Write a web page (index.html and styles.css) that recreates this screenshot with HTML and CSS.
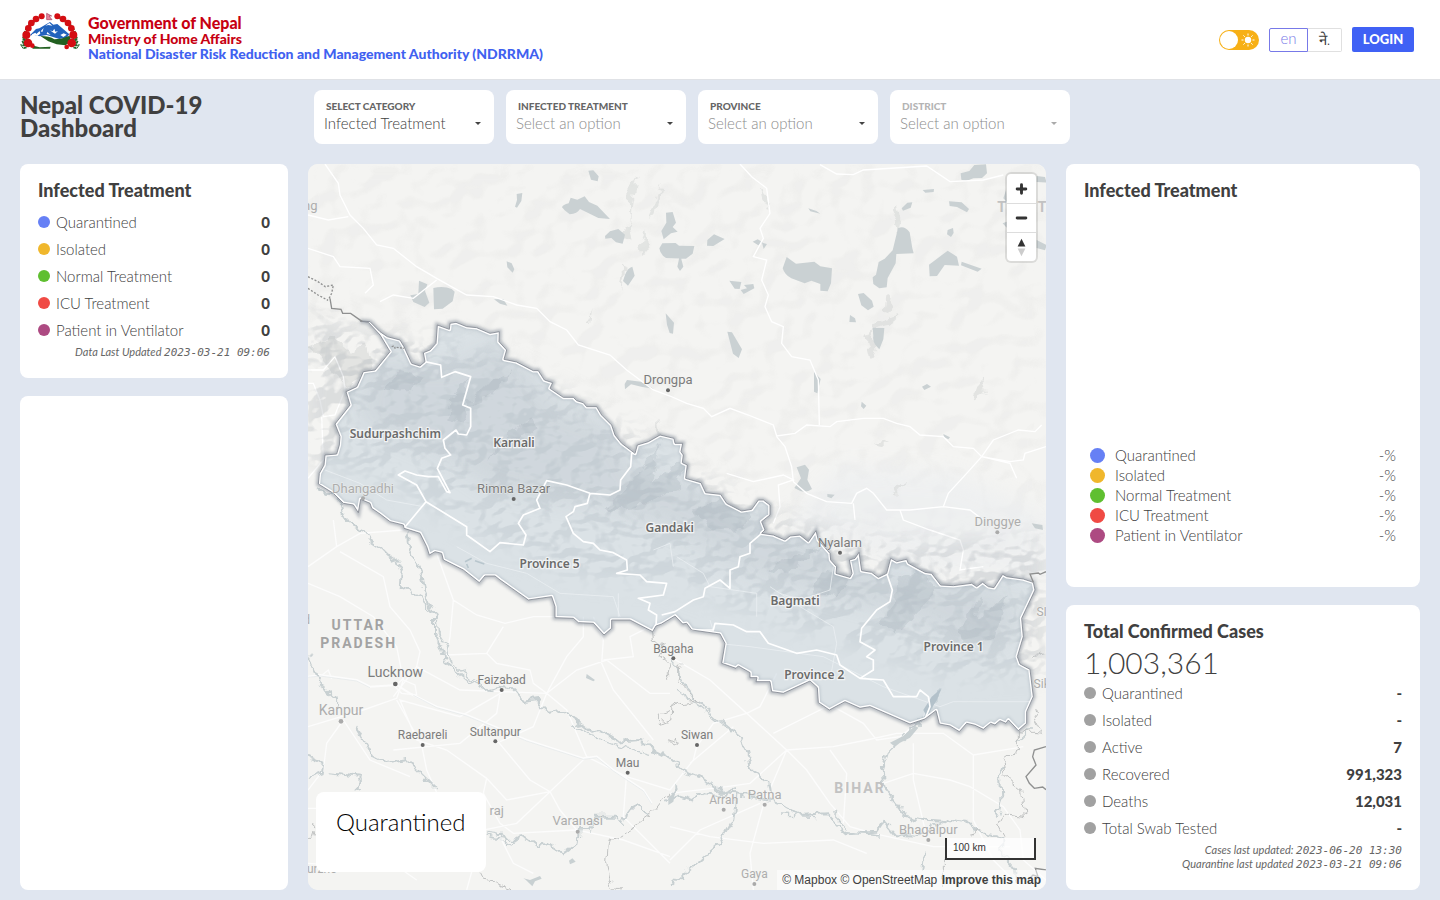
FILE: index.html
```html
<!DOCTYPE html>
<html lang="en">
<head>
<meta charset="utf-8">
<title>Nepal COVID-19 Dashboard</title>
<link rel="stylesheet" href="styles.css">
</head>
<body>
<header class="topbar">
  <svg class="emblem" viewBox="60 36 180 114" aria-hidden="true">
    <g fill="none" stroke="#23662a" stroke-width="9" stroke-dasharray="5 3">
      <path d="M76 146Q58 82 124 50M224 146Q242 82 172 50"/>
    </g>
    <path d="M70 146l-8-12 12 4-8-14 12 5-10-16 13 7-7-16 12 9M230 146l8-12-12 4 8-14-12 5 10-16-13 7 7-16-12 9" fill="none" stroke="#23662a" stroke-width="3"/>
    <path d="M88 107l20-20 10-2 32-19 10 8 12-2 36 31-8 10-22 4-38-12-22 4-18-5z" fill="#2263bd"/>
    <path d="M96 103l10-5 3 4 10-9 2 8-9 7-8-2-7 6zM136 77l12-8 9 8-12-2zM150 91l8 3 5-8 3 9 8-2-9 8-8-5zM181 105l10-5 9 4-10 7zM122 94l9-10-4 12zM142 96l10 9-12-3z" fill="#fff"/>
    <path d="M84 119l20-10 30 2 22 10 14 14 36 4-6 7H96z" fill="#fff"/>
    <path d="M121 108q28 0 42 10l20-2 26-9 5 18-18 11-26-3-25-9zM101 137l18 5 33-2-2 6H97z" fill="#226021"/>
    <g fill="#d40d12">
      <circle cx="125" cy="49" r="9"/><circle cx="108" cy="57" r="10"/><circle cx="94" cy="69" r="10"/><circle cx="85" cy="85" r="10"/><circle cx="79" cy="105" r="12"/><circle cx="84" cy="129" r="13"/>
      <circle cx="172" cy="49" r="9"/><circle cx="189" cy="57" r="10"/><circle cx="204" cy="69" r="10"/><circle cx="214" cy="85" r="10"/><circle cx="220" cy="105" r="12"/><circle cx="215" cy="129" r="13"/>
      <circle cx="200" cy="141" r="7"/><circle cx="97" cy="137" r="7"/>
    </g>
    <path d="M140 40l15 8h-8l9 11h-16z" fill="#e8869b" stroke="#a2405f" stroke-width="2"/>
  </svg>
  <div class="agency">
    <strong class="agency-gov">Government of Nepal</strong>
    <strong class="agency-ministry">Ministry of Home Affairs</strong>
    <strong class="agency-name">National Disaster Risk Reduction and Management Authority (NDRRMA)</strong>
  </div>
  <div class="actions">
    <label class="theme"><input type="checkbox" class="theme-input" aria-label="Dark theme"><span class="theme-knob"></span>
      <svg class="theme-sun" viewBox="0 0 14 14" aria-hidden="true"><circle cx="7" cy="7" r="3.2" fill="#fff"/><path d="M7 .5v2M7 11.500v2M.5 7h2M11.500 7h2M2.400 2.400l1.400 1.400M10.200 10.200l1.400 1.400M2.400 11.600l1.400-1.400M10.200 3.800l1.400-1.400" stroke="#fff"/></svg>
    </label>
    <div class="langs"><button class="lang lang-active" type="button">en</button><button class="lang" type="button" lang="ne">ने.</button></div>
    <button class="login" type="button">LOGIN</button>
  </div>
</header>

<section class="toolbar">
  <h1 class="title">Nepal COVID-19 Dashboard</h1>
  <form class="filters">
    <div class="filter"><label class="filter-label" for="category">SELECT CATEGORY</label><select class="filter-select chosen" id="category"><option>Infected Treatment</option></select></div>
    <div class="filter"><label class="filter-label" for="treatment">INFECTED TREATMENT</label><select class="filter-select" id="treatment"><option>Select an option</option></select></div>
    <div class="filter"><label class="filter-label" for="province">PROVINCE</label><select class="filter-select" id="province"><option>Select an option</option></select></div>
    <div class="filter disabled"><label class="filter-label" for="district">DISTRICT</label><select class="filter-select" id="district" disabled><option>Select an option</option></select></div>
  </form>
</section>

<main class="board">
  <div class="column">
    <section class="card">
      <h2 class="card-title">Infected Treatment</h2>
      <ul class="stats">
        <li class="stat"><i class="dot blue"></i>Quarantined<b class="value">0</b></li>
        <li class="stat"><i class="dot amber"></i>Isolated<b class="value">0</b></li>
        <li class="stat"><i class="dot green"></i>Normal Treatment<b class="value">0</b></li>
        <li class="stat"><i class="dot red"></i>ICU Treatment<b class="value">0</b></li>
        <li class="stat"><i class="dot plum"></i>Patient in Ventilator<b class="value">0</b></li>
      </ul>
      <p class="updated">Data Last Updated <time class="stamp">2023-03-21 09:06</time></p>
    </section>
    <section class="card grow"></section>
  </div>

  <section class="map" aria-label="Map of Nepal">
    <svg class="map-art" viewBox="24 12 2214 2178" preserveAspectRatio="xMidYMid slice">
      <defs>
        <path id="nepal" d="M180 483L210 485 240 515 262 530 300 540 312 560 335 610 360 618 375 605 370 578 390 570 408 550 412 495 448 508 450 490 468 487 500 500 530 503 570 520 598 515 597 545 620 570 612 598 650 606 700 632 715 632 733 660 758 668 750 685 790 712 820 712 830 722 850 728 860 740 890 740 905 765 935 795 945 825 965 850 1005 880 1012 855 1045 845 1080 825 1122 835 1125 850 1148 850 1143 875 1150 885 1147 908 1162 915 1157 955 1203 968 1217 998 1262 1003 1280 1030 1325 1053 1355 1048 1375 1020 1390 1020 1410 1035 1410 1065 1385 1085 1395 1110 1385 1120 1420 1125 1455 1140 1470 1128 1500 1125 1525 1145 1548 1112 1555 1140 1590 1180 1592 1200 1610 1220 1608 1240 1650 1252 1656 1240 1648 1200 1665 1195 1677 1177 1685 1232 1715 1237 1735 1252 1760 1240 1772 1195 1790 1205 1820 1198 1825 1210 1875 1237 1895 1240 1922 1275 1960 1277 2015 1270 2030 1280 2048 1267 2065 1280 2082 1283 2108 1243 2120 1250 2170 1257 2200 1267 2205 1290 2165 1375 2170 1430 2152 1490 2160 1512 2190 1528 2200 1610 2180 1655 2180 1690 2155 1712 2125 1680 2118 1690 2100 1682 2085 1695 2072 1690 2050 1708 2025 1696 2000 1690 1978 1715 1950 1698 1918 1692 1908 1652 1875 1677 1830 1692 1710 1640 1680 1645 1635 1625 1588 1650 1555 1628 1552 1583 1530 1563 1450 1600 1415 1595 1410 1565 1368 1565 1371 1553 1350 1553 1350 1538 1315 1518 1308 1525 1265 1510 1275 1450 1260 1422 1175 1410 1160 1390 1148 1392 1125 1368 1085 1392 1068 1398 1058 1415 990 1380 935 1380 935 1405 912 1425 880 1390 835 1388 820 1375 765 1373 765 1340 755 1310 685 1320 600 1260 585 1248 555 1248 538 1268 490 1230 430 1200 425 1180 405 1175 388 1185 380 1160 360 1120 312 1105 310 1095 270 1085 240 1062 215 1045 210 1030 182 1018 175 1058 160 1035 130 1030 100 1000 55 972 58 940 72 915 75 885 110 882 118 855 120 830 105 792 150 735 138 695 170 680 190 635 225 630 270 575 240 525 205 487Z"/>
        <clipPath id="inNepal"><use href="#nepal"/></clipPath>
        <filter id="ridges" x="0" y="0" width="100%" height="100%">
          <feTurbulence type="fractalNoise" baseFrequency=".010 .014" numOctaves="3" seed="8"/>
          <feDiffuseLighting surfaceScale="75" diffuseConstant="1.100" lighting-color="#fff"><feDistantLight azimuth="225" elevation="55"/></feDiffuseLighting>
          <feColorMatrix values="0 0 0 0 .42  0 0 0 0 .45  0 0 0 0 .48  -1.600 0 0 0 1.350"/>
        </filter>
        <filter id="swells" x="0" y="0" width="100%" height="100%">
          <feTurbulence type="fractalNoise" baseFrequency=".010 .012" numOctaves="2" seed="3"/>
          <feDiffuseLighting surfaceScale="70" diffuseConstant="1.100" lighting-color="#fff"><feDistantLight azimuth="225" elevation="55"/></feDiffuseLighting>
          <feColorMatrix values="0 0 0 0 .5  0 0 0 0 .5  0 0 0 0 .5  -1.600 0 0 0 1.300"/>
        </filter>
        <filter id="rough" x="-5%" y="-5%" width="110%" height="110%" color-interpolation-filters="sRGB">
          <feTurbulence type="fractalNoise" baseFrequency=".035" numOctaves="2" seed="5"/>
          <feDisplacementMap in="SourceGraphic" scale="34" xChannelSelector="R" yChannelSelector="G"/>
        </filter>
        <filter id="soft" x="-20%" y="-20%" width="140%" height="140%"><feGaussianBlur stdDeviation="32"/></filter>
        <filter id="halo" x="-5%" y="-5%" width="110%" height="110%"><feGaussianBlur stdDeviation="5"/></filter>
        <mask id="hills" maskUnits="userSpaceOnUse" x="0" y="0" width="2300" height="2200"><path d="M20 440L200 520 480 540 800 700 1110 880 1400 1060 1800 1150 2240 1130 2240 1540 1960 1560 1560 1430 1130 1280 800 1250 480 1100 250 960 0 900Z" fill="#fff" filter="url(#soft)"/></mask>
        <mask id="plateau" maskUnits="userSpaceOnUse" x="0" y="0" width="2300" height="2200"><path d="M0 0H2240V1200L1600 1160 1200 950 700 590 0 500Z" fill="#fff" filter="url(#soft)"/></mask>
      </defs>
      <rect x="24" y="12" width="2214" height="2178" fill="#f4f4f2"/>
      <g mask="url(#plateau)"><rect x="24" y="12" width="2214" height="1300" filter="url(#swells)" opacity=".08"/></g>
      <path d="M1450 1100L1620 920 1960 940 2240 1060V1250L1900 1240z" fill="#eaedf0" opacity=".55" filter="url(#soft)"/>
      <g fill="#d8dad9" opacity=".6" filter="url(#rough)">
        <path d="M985 95l28-53-16 85-9 80 7 38-34-15 28-48zM1060 140l28-75-18 98-22 4zM1020 250l18-38 8 55-19 21zM980 330l-25 57 12-79zM860 490l18-49-8 47zM1380 85l24 28 4 42-20-34zM1775 180l18-45 10 45-12 48zM1760 405l18 5-10 50-14-4zM1720 490l72-25-4 27-38 8-34 12zM1715 505l9 70-12 20-16-64zM2045 650l12 52-43 22zM1720 855l50-17-24 24zM1775 990l45-25-35 44zM1070 770l14 62-18-4zM30 560l70-30 50 45 45-30 20 80-70 55-60-60z"/>
      </g>
      <g fill="#cad1d3">
        <path d="M865 32l15-1 16 18-3 15-20-5zM650 102l17-3-3 24-13 20-6-3 6-20zM786 142q2-8 20-12l6-17 20 6 22-10 13 17 25 11 38 40-35-3-35-17-20-10q-8 14-31 16l-15-12zM915 228l15-14 25-7 20 17-7 27-20-4-14-13-18 2zM1098 158l20-2 10 32-10 13 15 14-20 5-22 18-7-25 15-25zM1078 265l9-15 40-1 10 8 46 1-5 23-20 15-60-2q-18-10-20-29zM620 304l15 6 8 18-5 10-16-16zM975 345q8-22 22-25l7 27-20 30-15-14zM357 362l25 11-7 20 13 35-14 13-34-15-9-20 24-4zM400 384q30-8 55 3l9 8-6 29-30 22-26 2zM582 418l28-1 12 20-22-6zM1097 460l25 28-3 33-10-2-8-25zM975 688l-1-16 7-12 42 5 38 21-34-5-34-8zM1222 240l20-17 32 14-34 21-19-1zM1358 245l15-7 15 9-13 9zM1386 248l15 4-10 15zM1132 320l8-38 10 38-10 13zM1288 362l36 4-5 21-15-1zM1332 375l28-3 3 13-32 17-9-12 19-5zM1282 515l14 2 30 51-10 26-17-13zM1525 145l24 8 12 8-30-7zM1498 325l18-4 21 8-35 5zM1448 325l12-34 28 20 55-6 18 14 35 6-3 45-10 24-22-2v-20l-27-10-20 8-40-15q-20-10-26-30zM1674 402l17-3 25 23 5 18-17 11-20-15zM1650 465l15 10 3 12-20-1zM1718 503l35 1-3 34-12 30q-22-20-18-40zM1794 205q18-10 35 12l8 48 4 15-52 2-2 28-24 44-3 28-22 3-18-13-2-20 10-8 8-38 18-10 24-25zM1805 145l17-17 15-1-5 16-23 9zM1868 90l34-3-1 9-25 2zM1887 314l20-15 36-27 28 18 6 27-43-2-23 33-22 1zM1985 305l60 21-12 9-50-19zM1947 124l38 3 22 20-6 10-30-16-22-3zM1943 210l16-6 2 15-8 12-12-8zM1982 40l26-7 15-18 35-2 3 27-15 14-26 1-21 8-15-4zM2210 48l25 3 5 17-30-2zM2110 115l8-25 2 35zM2108 190l12-5v18zM2210 240l30 15-5 16-25-7zM1542 635l20 22-10 43-10-5zM1490 922l25-8 12 15-5 30 14 28q-16 12-35 6l-18-9 20-29zM1582 1002l22 2-10 11-12-5zM1685 725l14 12-8 10-8-8zM1866 680l15-8 12 8-20 10zM1930 822l20 10-5 6-13-6zM2195 1090l32 5 2 15-24-5z"/>
      </g>
      <g fill="none" stroke="#fff" stroke-width="4">
        <path d="M75 12L115 70 120 105 150 165 190 205 230 255 280 265 350 320 410 355 500 405 580 410 650 435 710 445 750 485 800 510 835 555 930 585 980 630 1060 690 1110 708 1160 730 1210 745 1235 770 1290 745 1345 765 1370 775 1420 795 1430 828 1485 820 1520 795 1590 800 1610 785 1690 775 1750 775 1790 790 1830 800 1860 825 1930 830 1960 860 2020 865 2045 890 2130 905 2170 900 2175 880 2238 860M1320 12L1355 50 1400 85 1410 160 1380 205 1390 235 1360 290 1400 300 1385 360 1405 405 1395 440 1415 485 1450 500 1445 550 1475 590 1530 600 1555 660 1558 795M1560 14L1610 42 1660 44 1690 30 1880 18 1950 65 2050 60 2110 45M24 265L100 290 120 320 210 325 220 375 195 400M240 425L280 405 340 415 410 360M24 165L85 180 145 170M1430 830L1455 860 1475 920 1480 965 1520 1000 1580 1025 1655 1030 1670 1000 1700 985 1720 1000 1760 1050 1830 1050 1930 1040 1945 1000 2000 940 2045 890 2080 840 2155 810 2205 815 2225 795M1280 940L1360 965 1450 945 1480 960 1435 975 1440 1040 1420 1090M1660 1030L1665 1080M1800 1050L1810 1080 1890 1110 1980 1140 1990 1170 1980 1230 2050 1220M1930 1040L2010 1050 2050 1080M2045 890L2130 910 2150 955M24 630L70 630 105 590 130 650 135 690 105 765 70 770 60 720 40 670 24 670M65 770L70 900 24 955"/>
      </g>
      <g stroke="#fcfcfc" fill="none" stroke-width="4">
        <path d="M24 1270L120 1310 220 1370 290 1460 310 1560 290 1615 190 1650 24 1700M100 1080L110 1160 24 1220M110 1160L180 1120 310 1110M120 1175L250 1250 270 1340 330 1410 360 1475 350 1520 480 1590 610 1595 740 1600 830 1530 920 1500 1050 1600 1110 1600M410 1180L460 1320 530 1365 615 1390 700 1370 830 1370M460 1320L450 1430 440 1485 560 1480 610 1400M560 1480L590 1510 690 1530 700 1570 740 1600M610 1595L480 1670 300 1620 350 1740 440 1770 560 1855 620 1920 750 1895 860 1790 800 1650 740 1600 800 1490 850 1430 850 1370M350 1520L280 1610M130 1680L80 1750 70 1830 24 1890M130 1680L210 1800 330 1850M280 1770L480 1750 590 1660 600 1600M590 1740L690 1860 750 1895 780 1950 830 2010 970 2040 1110 2090M560 1855L550 1900 600 1990 640 2020 830 2010M290 1620L365 1755 380 1830 420 1920M750 1895L650 1990 550 2010 500 2190M860 1790L980 1850 1110 1890 1180 1800 1190 1760 1240 1690 1340 1660 1460 1770 1600 1760 1700 1740 1790 1720 1930 1720 2020 1785 2170 1760M1110 1490L1230 1560 1340 1660 1380 1640 1430 1540M1460 1770L1350 1870 1280 1880 1110 1900M1460 1770L1520 1830 1590 1930 1650 2000 1720 2020 1900 2060 2130 2060M1460 1770L1390 1935 1350 2080 1360 2190M1850 1690L1800 1730 1730 1740 1690 1690 1600 1640M1750 1870L1840 1840 1950 1860 2010 1880 2110 1940 2160 2010 2170 2100 2238 2160M2020 1785L2020 1980 2080 2100 2160 2180M1110 2000L1230 2030 1390 2050 1600 2040 1700 2080M1110 2100L1200 2010 1380 1930M880 1370L910 1440 905 1510 940 1590 1060 1740M910 1500L1000 1490 990 1430 1110 1370M740 1600L700 1700 600 1745M24 1945L50 1945M980 1840L970 1970 1110 2110M24 2110L180 2120 250 2090 350 2160M600 2030L640 2110 700 2140M1170 1810L1300 1700M1420 1720L1580 1640M1590 1770L1640 1840 1630 1990M1840 1750L1840 1860 1880 2030"/>
        <path d="M24 1550L60 1545 170 1560 210 1580 290 1575 330 1600 410 1640 500 1665 680 1740 850 1795 890 1790 940 1830 1030 1890 1055 1930" stroke-width="6"/>
        <path d="M310 1560l35 15 5 30-45-5-20-20 25-25M60 1550l25-20 10 26"/>
      </g>
      <path d="M24 1552L60 1548 170 1563 210 1583M340 1606L410 1643 500 1668 680 1743 850 1798 890 1793 940 1833 1030 1893 1055 1933" fill="none" stroke="#e2e7e8" stroke-width="2"/>
      <g fill="none" stroke="#c8d0d2" stroke-width="6" stroke-linejoin="round" filter="url(#rough)">
        <path d="M50 975L80 1000 100 1010 125 1030 135 1070 155 1100 190 1115 210 1140 240 1160 265 1185 295 1205 305 1240 302 1280 330 1290 365 1310 385 1350M320 1120L328 1170 350 1210 365 1240 375 1280 385 1330 405 1370 405 1420 430 1470 435 1505 480 1540 510 1565 560 1590 600 1580 640 1585 675 1625 710 1620 745 1655 785 1650 825 1680 870 1715 900 1710 955 1745 1020 1740 1060 1770 1110 1795 1150 1830 1210 1855 1260 1890 1275 1900 1330 1905 1440 1930 1500 1965 1580 1960 1640 2020 1730 2015 1750 1985 1785 2025 1840 2030 1900 2000 1950 1980 2000 1985 2050 2020 2110 2035 2110 2090 2145 2130 2150 2170M24 1485L50 1545 75 1590 110 1620 115 1650M165 1700L190 1740 220 1790 260 1810 320 1800 360 1840 410 1890M24 1790L70 1810 65 1840 24 1855M80 1840L180 1850 170 1885 190 1895M565 2015L600 2020 620 2055 665 2025 715 2065 735 2045 790 2080 835 2050 840 2010 870 2010 885 1970 950 1970 970 1995 980 1955 1010 1935 1050 1965M1110 1490L1150 1570 1190 1620 1270 1690 1320 1730 1340 1770 1355 1830 1405 1870 1410 1905M1110 1920L1140 1910 1170 1920 1200 1900 1270 1905 1305 1890M1310 1900L1300 1980 1260 2050 1190 2110 1110 2180M1915 1585L1905 1640 1850 1690 1800 1740 1760 1780 1745 1830 1750 1880 1780 1920 1820 1970 1880 1985 1940 1990M2200 1700L2150 1750M2110 1820L2100 1850 2105 1920 2090 1970M1875 2075L1870 2130M1100 1930L1130 1885"/>
        <path d="M1440 1965L1550 1970M1600 1960L1640 2005M375 1290L395 1340 412 1380 415 1420 440 1460 445 1500 520 1560 580 1595M820 1690L870 1725 950 1755 1050 1780M1130 1590L1200 1640 1280 1705M1620 2010L1740 2025M560 2025L610 2035 650 2035" stroke-width="4"/>
      </g>
      <path d="M1105 1910l20-10-5 25-15 10zM860 1542l25 18-5 4-22-10zM807 2102l10-7 10 10-17 8zM670 2155l20 5 30-12 5 8-20 8-8 15-20-20zM1770 1748l40-20 35-30 10 5-25 30-30 15-15 12z" fill="#c8d0d2"/>
      <g stroke="#bfc1c1" fill="none" stroke-width="3">
        <path d="M1058 1415L1060 1440 1090 1460 1080 1490 1110 1510 1105 1540 1110 1560M1148 1635L1120 1630 1115 1680 1075 1690 1075 1665 1110 1655M1140 1510L1130 1560 1160 1590 1200 1625 1110 1640M1110 1745L1135 1750 1125 1735 1105 1745M1110 1895L1060 1960 990 2010 925 2050 920 2110 935 2180 960 2190M24 2035L40 2035 48 1990M540 2135L550 2155 590 2160 600 2180 630 2190M2155 1712L2225 1720 2200 1670 2215 1650M2155 1712L2155 1770 2110 1800 2115 1850 2165 1890 2175 1970 2110 1960 2095 1990 2115 2030M1930 2190L1930 2100M2200 1490L2238 1480M2015 2020L2050 2010" filter="url(#rough)"/>
      </g>
      <g mask="url(#hills)"><rect x="24" y="400" width="2214" height="1250" filter="url(#ridges)" opacity=".34"/></g>
      <use href="#nepal" fill="none" stroke="#7a8491" stroke-width="14" opacity=".5" filter="url(#halo)"/>
      <use href="#nepal" fill="#bdcbd7" fill-opacity=".45"/>
      <g clip-path="url(#inNepal)">
        <path d="M220 600L440 620 600 545 780 750 930 800 1010 950 1200 980 1400 1110 1540 1160 1690 1240 1910 1280 2100 1290 2170 1390 2060 1460 1820 1370 1570 1300 1340 1240 1100 1100 900 1040 580 990 430 890 170 780z" fill="#a7b0ba" opacity=".2" filter="url(#soft)"/>
        <path filter="url(#rough)" d="M245 690l55-55 70 16-40 38-60 5zM460 700l45-45-15 85 15 45-60-10zM550 680l90-50-70 78-90 40zM630 815l65-40 15 30-100 60-55 45zM920 1050l70-80 90-120-25 120 90-75-5 85-130 60zM1180 1050l90-35 80 50-20 45-100-5zM1570 1230l80 10-25 65-90-5zM1790 1250l70-15 60 50-130 135-50-30 45-60zM1980 1400l60-90-10 70 90-80-35 130-95 25zM1480 1180l90-20-100 75-70-5z" fill="#a0aab4" opacity=".24"/>
        <g fill="none" stroke="#edf1f3" stroke-width="3" opacity=".7"><path d="M75 930L180 970 260 1020 370 1040M470 1160L560 1210 680 1240 780 1300 940 1310 960 1370M955 1300L955 1370M1130 1190L1210 1240 1230 1280 1370 1300 1370 1370M1230 1380L1250 1450 1350 1460 1570 1490 1750 1580 1920 1640 1960 1625 2190 1625M1410 1280L1500 1340 1600 1400 1610 1450 1590 1560M1600 1220L1590 1290 1500 1320 1440 1300M1060 1170L1110 1150 1120 1220M1890 1610L1870 1670"/></g>
        <path d="M1925 1585L1910 1620 1880 1670 1870 1650 1895 1610z" fill="#b3c1ca"/>
        <path d="M495 1205l20-10M500 1212l5 12M525 1202l28 10" fill="none" stroke="#b8c6cd" stroke-width="5"/>
      </g>
      <g fill="none" stroke="#fff" stroke-width="5" stroke-linejoin="round">
        <path d="M375 605L422 615 425 652 465 635 512 650 488 735 512 745 512 800 500 825 475 822 468 810 430 840 435 865 452 885 425 895 412 925 450 998 440 995 415 950 385 950 350 945 315 933 295 945 350 975 378 1025 312 1105M378 1025L500 1100 500 1125 570 1175 600 1148 670 1155 678 1125 655 1090 670 1065 720 1045 710 1020 740 962 800 975 870 1000 930 1005 960 990 962 960 992 920 995 880 1005 880M870 1000L862 1030 825 1040 820 1055 798 1070 820 1120 850 1145 880 1150 900 1170 940 1178 980 1200 982 1230 950 1240 1020 1245 1040 1265 1100 1270 1090 1305 1015 1315 1050 1330 1045 1350 1070 1365 1068 1395M1085 1365L1125 1355 1180 1320 1210 1310 1215 1285 1260 1260 1290 1285 1290 1230 1315 1220 1320 1190 1350 1180 1350 1150 1385 1120M1175 1410L1240 1410 1245 1390 1300 1395 1340 1415 1380 1415 1405 1450 1490 1480 1550 1470 1610 1485 1620 1515 1680 1555 1720 1530 1720 1500 1700 1490 1725 1470 1680 1445 1685 1405 1730 1350 1770 1325 1777 1290 1760 1240M1680 1555L1750 1560 1780 1610 1850 1610 1860 1590 1885 1610 1890 1640 1875 1677"/>
        <use href="#nepal" stroke-width="11" clip-path="url(#inNepal)"/>
      </g>
      <use href="#nepal" fill="none" stroke="#858993" stroke-width="3" opacity=".85"/>
      <g fill="none" stroke="#8f9090" stroke-width="4"><path d="M24 350l30 15 22 15 24-5-5 25-10 20M24 385l30 20 30 16" stroke-dasharray="6 5"/><path d="M90 415l5 30 28 3 5 12h24l35 25M2200 1267l-10-25 25-3 5 4 18-8M2238 1760l-35 10-5 20 10 25-30 35 10 20 15 15 25-4 10 8M2238 2130l-32-5 8 25-15-5-15 15"/><path d="M275 560q10-5 10 6M290 562l22 3" stroke-dasharray="6 4"/></g>
      <g class="place">
        <text x="1104" y="672" class="town">Drongpa</text>
        <text x="189" y="998" class="town faded">Dhangadhi</text><text x="641" y="998" class="town">Rimna Bazar</text>
        <text x="2093" y="1098" class="town faded">Dinggye</text><text x="1620" y="1160" class="town">Nyalam</text>
        <text x="286" y="1552" class="city">Lucknow</text><text x="605" y="1573">Faizabad</text><text x="123" y="1664" class="city faded">Kanpur</text>
        <text x="368" y="1737">Raebareli</text><text x="586" y="1727">Sultanpur</text><text x="983" y="1820">Mau</text><text x="1120" y="1480">Bagaha</text><text x="1191" y="1738">Siwan</text>
        <text x="833" y="1995" class="town faded">Varanasi</text><text x="590" y="1965" class="town faded">raj</text><text x="1271" y="1933" class="faded">Arrah</text><text x="1394" y="1917" class="town faded">Patna</text><text x="1885" y="2021" class="town faded">Bhagalpur</text><text x="1363" y="2155" class="faded">Gaya</text>
        <text x="31" y="150" class="town faded">ng</text><text x="20" y="1393" class="faded">d</text><text x="66" y="2138" class="faded">urzno</text><text x="2225" y="1585" class="faded">Sik</text><text x="2225" y="1368" class="faded">SI</text>
      </g>
      <g class="state"><text x="176" y="1411">UTTAR</text><text x="176" y="1465">PRADESH</text><text x="1680" y="1900" class="faded">BIHAR</text><text x="2108" y="157" class="faded">T</text><text x="2229" y="157" class="faded">T</text></g>
      <g fill="#666"><circle cx="1104" cy="691" r="6"/><circle cx="641" cy="1017" r="6"/><circle cx="1620" cy="1178" r="6"/><circle cx="286" cy="1572" r="7"/><circle cx="605" cy="1590" r="6"/><circle cx="368" cy="1755" r="6"/><circle cx="586" cy="1744" r="6"/><circle cx="983" cy="1838" r="6"/><circle cx="1120" cy="1495" r="6"/><circle cx="1191" cy="1755" r="6"/></g>
      <g fill="#aaa"><circle cx="189" cy="1015" r="6"/><circle cx="2092" cy="1117" r="6"/><circle cx="123" cy="1684" r="7"/><circle cx="833" cy="2015" r="6"/><circle cx="1271" cy="1949" r="6"/><circle cx="1394" cy="1934" r="6"/><circle cx="1885" cy="2040" r="6"/><circle cx="1363" cy="2172" r="6"/></g>
      <g class="region"><text x="286" y="834">Sudurpashchim</text><text x="642" y="861">Karnali</text><text x="1109" y="1116">Gandaki</text><text x="749" y="1223">Province 5</text><text x="1485" y="1335">Bagmati</text><text x="1961" y="1474">Province 1</text><text x="1543" y="1557">Province 2</text></g>
    </svg>
    <div class="zoom">
      <button class="zoom-btn" type="button" aria-label="Zoom in"><svg class="zoom-icon" viewBox="0 0 29 29"><path d="M14.500 10v9M10 14.500h9" stroke="#333" stroke-width="3" stroke-linecap="round"/></svg></button>
      <button class="zoom-btn" type="button" aria-label="Zoom out"><svg class="zoom-icon" viewBox="0 0 29 29"><path d="M10 14.500h9" stroke="#333" stroke-width="3" stroke-linecap="round"/></svg></button>
      <button class="zoom-btn" type="button" aria-label="Reset bearing to north"><svg class="zoom-icon" viewBox="0 0 29 29"><path d="M10.500 14l4-8 4 8z" fill="#333"/><path d="M10.500 16l4 8 4-8z" fill="#ccc"/></svg></button>
    </div>
    <div class="legend">Quarantined</div>
    <div class="map-foot">
      <div class="scale">100 km</div>
      <div class="credits"><a class="credit" href="#">© Mapbox</a> <a class="credit" href="#">© OpenStreetMap</a> <a class="credit improve" href="#">Improve this map</a></div>
    </div>
  </section>

  <div class="column">
    <section class="card grow chart">
      <h2 class="card-title">Infected Treatment</h2>
      <ul class="shares">
        <li class="share"><i class="dot large blue"></i>Quarantined<span class="value">-%</span></li>
        <li class="share"><i class="dot large amber"></i>Isolated<span class="value">-%</span></li>
        <li class="share"><i class="dot large green"></i>Normal Treatment<span class="value">-%</span></li>
        <li class="share"><i class="dot large red"></i>ICU Treatment<span class="value">-%</span></li>
        <li class="share"><i class="dot large plum"></i>Patient in Ventilator<span class="value">-%</span></li>
      </ul>
    </section>
    <section class="card">
      <h2 class="card-title">Total Confirmed Cases</h2>
      <p class="total">1,003,361</p>
      <ul class="stats totals">
        <li class="stat"><i class="dot"></i>Quarantined<b class="value">-</b></li>
        <li class="stat"><i class="dot"></i>Isolated<b class="value">-</b></li>
        <li class="stat"><i class="dot"></i>Active<b class="value">7</b></li>
        <li class="stat"><i class="dot"></i>Recovered<b class="value">991,323</b></li>
        <li class="stat"><i class="dot"></i>Deaths<b class="value">12,031</b></li>
        <li class="stat"><i class="dot"></i>Total Swab Tested<b class="value">-</b></li>
      </ul>
      <p class="updated">Cases last updated: <time class="stamp">2023-06-20 13:30</time></p>
      <p class="updated">Quarantine last updated <time class="stamp">2023-03-21 09:06</time></p>
    </section>
  </div>
</main>
</body>
</html>
```
FILE: styles.css
```css
* { box-sizing: border-box; }
body { margin: 0; min-height: 100vh; display: flex; flex-direction: column; background: #e0e6f0; color: #404040; font: 300 15px/20px Lato, sans-serif; }
h1, h2, p, ul { margin: 0; padding: 0; }
button, select { font: inherit; color: inherit; }

.topbar { display: flex; align-items: flex-start; padding: 12px 26px 16px 20px; min-height: 80px; background: #fff; border-bottom: 1px solid #e0e2e6; }
.emblem { width: 60px; height: 38px; }
.agency { display: flex; flex-direction: column; padding: 3px 0 0 8px; font-weight: 900; }
.agency-gov { font-size: 16px; line-height: 16px; color: #c70012; }
.agency-ministry { font-size: 14px; line-height: 15px; color: #c70012; }
.agency-name { font-size: 14px; line-height: 15px; color: #4061f0; }
.actions { display: flex; align-items: center; gap: 10px; margin: 15px 0 0 auto; }
.theme { display: flex; align-items: center; justify-content: space-between; width: 40px; height: 20px; padding: 0 4px 0 1px; border-radius: 10px; background: #f7b016; }
.theme-input { position: absolute; opacity: 0; }
.theme-knob { width: 18px; height: 18px; border-radius: 50%; background: #fff; }
.theme-sun { width: 14px; height: 14px; }
.langs { display: flex; }
.lang { width: 34px; height: 24px; padding: 0 0 2px; border: 1px solid #e0e0e0; border-left: 0; border-radius: 0 2px 2px 0; background: #fff; font-size: 15px; line-height: 18px; }
.lang-active { width: 39px; padding-bottom: 4px; border: 1px solid #7779e8; border-radius: 2px 0 0 2px; color: #7779e8; }
.login { width: 62px; height: 25px; padding: 0 0 2px; border: 0; border-radius: 2px; background: #4061f5; color: #fff; font-size: 13px; font-weight: 900; }

.toolbar { display: flex; align-items: flex-start; gap: 26px; padding: 10px 20px 20px; }
.title { flex: 0 0 268px; padding: 3px 60px 0 0; font-size: 24px; line-height: 23px; font-weight: 900; }
.filters { display: flex; gap: 12px; }
.filter { width: 180px; height: 54px; padding: 10px 10px 0; border-radius: 8px; background: #fff; display: flex; flex-direction: column; }
.filter-label { padding-left: 2px; font-size: 10px; line-height: 13px; font-weight: 900; color: #666; }
.filter-select { appearance: none; padding: 0; border: 0; outline: 0; font-size: 15px; line-height: 20px; color: #8c8c8c; opacity: 1; background: url("data:image/svg+xml,%3Csvg xmlns='http://www.w3.org/2000/svg' width='6' height='3'%3E%3Cpath d='M0 0h6L3 3z' fill='%23444'/%3E%3C/svg%3E") no-repeat right 3px center; }
.filter-select.chosen { color: #404040; }
.disabled .filter-label { color: #b4b4b4; }
.disabled .filter-select { background-image: url("data:image/svg+xml,%3Csvg xmlns='http://www.w3.org/2000/svg' width='6' height='3'%3E%3Cpath d='M0 0h6L3 3z' fill='%23aaa'/%3E%3C/svg%3E"); }

.board { flex: 1; display: grid; grid-template-columns: 268px minmax(0, 1fr) 354px; gap: 20px; padding: 0 20px 10px; }
.column { display: flex; flex-direction: column; gap: 18px; }
.card { padding: 16px 18px 19px; border-radius: 8px; background: #fff; }
.grow { flex: 1; }
.card-title { font-size: 18px; line-height: 20px; font-weight: 900; }
.stats, .shares { list-style: none; }
.stats { margin: 8px 0 2px; }
.stat { display: flex; align-items: center; gap: 6px; height: 27px; }
.value { margin-left: auto; }
.stat .value { font-weight: 900; }
.dot { width: 12px; height: 12px; border-radius: 50%; background: #a1a1a1; }
.large { width: 15px; height: 15px; }
.blue { background: #6680f5; }
.amber { background: #f0b72c; }
.green { background: #5fbf30; }
.red { background: #f04a44; }
.plum { background: #ad4a82; }
.updated { text-align: right; font-size: 11px; line-height: 14px; font-style: italic; font-weight: 400; color: #666; white-space: nowrap; }
.stamp { font: italic 11px/10px "DejaVu Sans Mono", monospace; }
.chart { display: flex; flex-direction: column; }
.shares { margin-top: auto; padding: 0 6px 23px; }
.share { display: flex; align-items: center; gap: 10px; height: 20px; }
.total { margin-top: 5px; font-size: 30px; line-height: 33px; }
.totals { margin-top: 0; }

.map { position: relative; display: flex; overflow: hidden; border-radius: 10px; background: #f4f4f2; }
.map-art { position: absolute; inset: 0; width: 100%; height: 100%; }
.place { font: 400 36px Roboto, sans-serif; fill: #7c7c7c; text-anchor: middle; paint-order: stroke; stroke: #f4f4f2; stroke-width: 3px; stroke-opacity: .7; }
.town { font-size: 39px; }
.city { font-size: 42px; }
.faded { fill: #adadad; }
.state { font: 700 42px Roboto, sans-serif; letter-spacing: 6px; fill: #a3a3a3; text-anchor: middle; }
.state .faded { fill: #c2c2c2; }
.region { font: 600 36px "Noto Sans", sans-serif; fill: #6b6b6b; text-anchor: middle; paint-order: stroke; stroke: #f1f3f4; stroke-width: 7px; }
.zoom { position: absolute; top: 10px; right: 10px; display: flex; flex-direction: column; border-radius: 4px; background: #fff; box-shadow: 0 0 0 2px rgba(0, 0, 0, .1); }
.zoom-btn { display: block; width: 29px; height: 29px; padding: 0; border: 0; border-top: 1px solid #ddd; background: none; }
.zoom-btn:first-child { border-top: 0; }
.zoom-icon { display: block; width: 29px; height: 28px; fill: none; }
.legend { position: absolute; left: 8px; bottom: 18px; padding: 20px 21px 40px 20px; border-radius: 8px; background: #fff; color: #000; font-size: 24px; line-height: 20px; font-weight: 300; }
.map-foot { position: absolute; right: 0; bottom: 0; display: flex; flex-direction: column; align-items: flex-end; gap: 10px; font-family: "Liberation Sans", Arial, sans-serif; font-weight: 400; }
.scale { width: 91px; height: 22px; margin-right: 10px; padding: 0 6px; border: 2px solid #333; border-top: 0; background: rgba(255, 255, 255, .75); font-size: 10px; line-height: 19px; color: #333; }
.credits { padding: 0 5px; background: rgba(255, 255, 255, .5); font-size: 12px; line-height: 20px; white-space: nowrap; }
.credit { color: #404040; text-decoration: none; }
.improve { margin-left: 1px; font-weight: 700; }
```
